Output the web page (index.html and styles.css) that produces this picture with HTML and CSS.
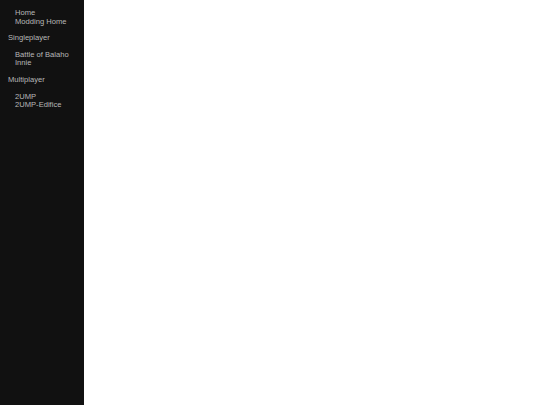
FILE: index.html
```html
<!DOCTYPE html>
<html>
<head>
<meta charset="utf-8">
<link rel="stylesheet" href="styles.css">
</head>
<body>
<div class="layout">
  <nav class="sidebar">
    <ul class="group">
      <li>Home</li>
      <li>Modding Home</li>
    </ul>
    <div class="heading">Singleplayer</div>
    <ul class="group">
      <li>Battle of Balaho</li>
      <li>Innie</li>
    </ul>
    <div class="heading">Multiplayer</div>
    <ul class="group">
      <li>2UMP</li>
      <li>2UMP-Edifice</li>
    </ul>
  </nav>
  <main class="content"></main>
</div>
</body>
</html>
```
FILE: styles.css
```css
html, body {
  margin: 0;
  padding: 0;
  height: 100%;
  background: #ffffff;
}
.layout {
  display: flex;
  height: 100%;
}
.sidebar {
  width: 84px;
  flex: 0 0 84px;
  background: #111111;
  color: #b8b8b8;
  font-family: "Liberation Sans", Arial, sans-serif;
  font-size: 7.6px;
  line-height: 8.6px;
  padding: 9px 0 0 8px;
  box-sizing: border-box;
  display: flex;
  flex-direction: column;
  gap: 8px;
}
.group {
  list-style: none;
  margin: 0;
  padding: 0 0 0 7px;
}
.heading {
  margin: 0;
}
.content {
  flex: 1;
  background: #ffffff;
}
```
